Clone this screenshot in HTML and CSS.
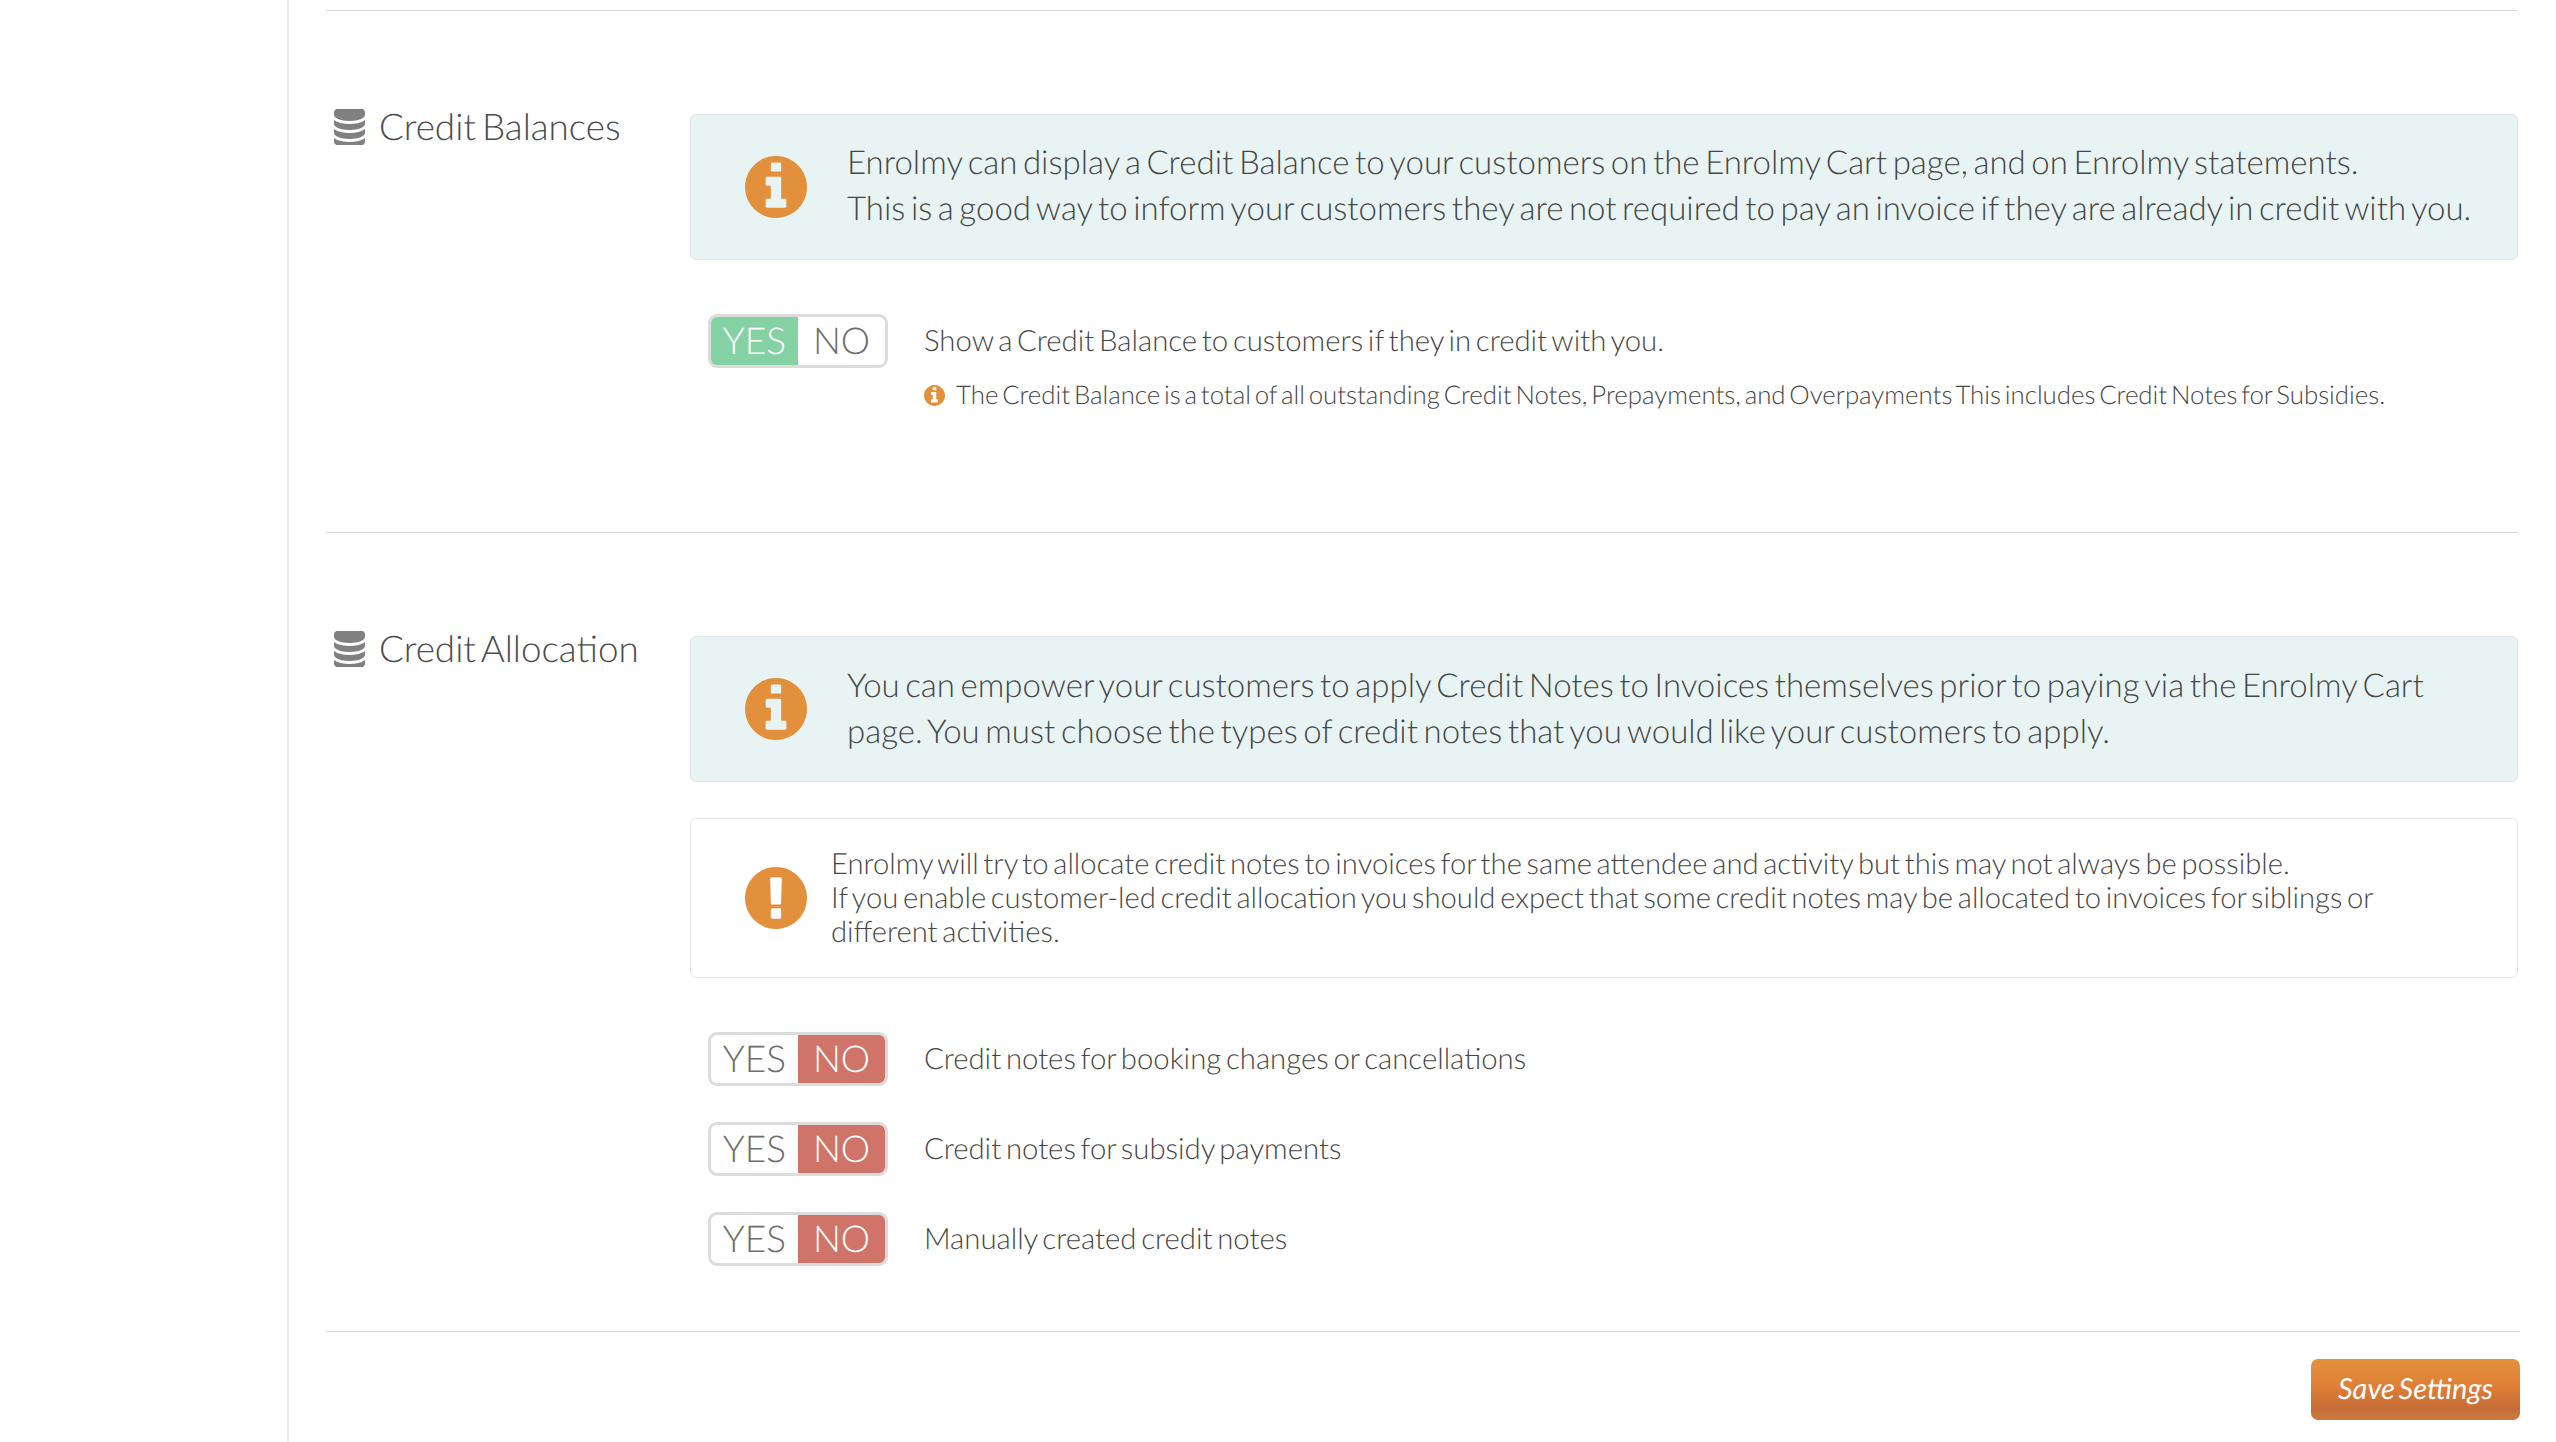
FILE: index.html
```html
<!DOCTYPE html>
<html lang="en">
<head>
<meta charset="utf-8">
<title>Credit settings</title>
<link rel="stylesheet" href="styles.css">
</head>
<body>
<svg class="defs" width="0" height="0" aria-hidden="true">
  <symbol id="i-db" viewBox="0 128 1536 1536" preserveAspectRatio="none"><path d="M768 768q237 0 443-43t325-127v170q0 69-103 128t-280 93.500-385 34.500-385-34.500-280-93.500-103-128v-170q119 84 325 127t443 43zm0 768q237 0 443-43t325-127v170q0 69-103 128t-280 93.500-385 34.500-385-34.500-280-93.500-103-128v-170q119 84 325 127t443 43zm0-384q237 0 443-43t325-127v170q0 69-103 128t-280 93.500-385 34.500-385-34.500-280-93.500-103-128v-170q119 84 325 127t443 43zm0-1152q208 0 385 34.500t280 93.500 103 128v128q0 69-103 128t-280 93.500-385 34.500-385-34.500-280-93.500-103-128v-128q0-69 103-128t280-93.500 385-34.500z"/></symbol>
  <symbol id="i-info" viewBox="0 128 1536 1536"><path d="M1024 1376v-160q0-14-9-23t-23-9h-96v-512q0-14-9-23t-23-9h-320q-14 0-23 9t-9 23v160q0 14 9 23t23 9h96v320h-96q-14 0-23 9t-9 23v160q0 14 9 23t23 9h448q14 0 23-9t9-23zm-128-896v-160q0-14-9-23t-23-9h-192q-14 0-23 9t-9 23v160q0 14 9 23t23 9h192q14 0 23-9t9-23zm640 416q0 209-103 385.500t-279.500 279.500-385.500 103-385.500-103-279.500-279.500-103-385.500 103-385.500 279.500-279.500 385.500-103 385.500 103 279.500 279.500 103 385.500z"/></symbol>
  <symbol id="i-warn" viewBox="0 128 1536 1536"><path d="M768 128q209 0 385.500 103t279.500 279.500 103 385.500-103 385.500-279.500 279.500-385.500 103-385.500-103-279.500-279.500-103-385.500 103-385.500 279.500-279.500 385.500-103zm128 1247v-190q0-14-9-23.500t-22-9.500h-192q-13 0-23 10t-10 23v190q0 13 10 23t23 10h192q13 0 22-9.500t9-23.500zm-2-344l18-621q0-12-10-18-10-8-24-8h-220q-14 0-24 8-10 6-10 18l17 621q0 10 10 17.500t24 7.500h185q14 0 23.500-7.500t10.500-17.500z"/></symbol>
</svg>
<div class="page">
  <aside class="sidebar"></aside>
  <main class="content">
    <section class="section first">
      <h2 class="heading"><svg class="db"><use href="#i-db"/></svg>Credit Balances</h2>
      <div class="body">
        <div class="alert info">
          <svg class="big-icon"><use href="#i-info"/></svg>
          <p>Enrolmy can display a Credit Balance to your customers on the Enrolmy Cart page, and on Enrolmy statements.<br>This is a good way to inform your customers they are not required to pay an invoice if they are already in credit with you.</p>
        </div>
        <div class="option top-option">
          <div class="toggle"><span class="yes on">YES</span><span class="no">NO</span></div>
          <div class="label">Show a Credit Balance to customers if they in credit with you.</div>
        </div>
        <div class="hint"><svg class="small-icon"><use href="#i-info"/></svg>The Credit Balance is a total of all outstanding Credit Notes, Prepayments, and Overpayments This includes Credit Notes for Subsidies.</div>
      </div>
    </section>
    <section class="section second">
      <h2 class="heading"><svg class="db"><use href="#i-db"/></svg>Credit Allocation</h2>
      <div class="body">
        <div class="alert info">
          <svg class="big-icon"><use href="#i-info"/></svg>
          <p>You can empower your customers to apply Credit Notes to Invoices themselves prior to paying via the Enrolmy Cart page. You must choose the types of credit notes that you would like your customers to apply.</p>
        </div>
        <div class="alert warning">
          <svg class="big-icon"><use href="#i-warn"/></svg>
          <p>Enrolmy will try to allocate credit notes to invoices for the same attendee and activity but this may not always be possible.<br>If you enable customer-led credit allocation you should expect that some credit notes may be allocated to invoices for siblings or different activities.</p>
        </div>
        <div class="options">
          <div class="option">
            <div class="toggle"><span class="yes">YES</span><span class="no on">NO</span></div>
            <div class="label">Credit notes for booking changes or cancellations</div>
          </div>
          <div class="option">
            <div class="toggle"><span class="yes">YES</span><span class="no on">NO</span></div>
            <div class="label">Credit notes for subsidy payments</div>
          </div>
          <div class="option">
            <div class="toggle"><span class="yes">YES</span><span class="no on">NO</span></div>
            <div class="label">Manually created credit notes</div>
          </div>
        </div>
      </div>
    </section>
    <footer class="actions"><button class="save" type="button">Save Settings</button></footer>
  </main>
</div>
</body>
</html>
```

FILE: styles.css
```css
* { box-sizing: border-box; }
html, body { margin: 0; padding: 0; background: #fff; }
body { height: 1442px; overflow: hidden; font-family: "Lato", sans-serif; font-weight: 300; color: #464646; text-rendering: geometricPrecision; word-spacing: -3.2px; }
.defs { position: absolute; }
.page { display: flex; height: 1442px; }
.sidebar { width: 289px; flex: none; border-right: 2px solid #ececec; }
.content { margin-left: 37px; width: 2192px; padding-top: 10px; }
.section { display: flex; border-top: 1px solid #d8d8d8; padding-top: 103px; }
.section.first { height: 522px; }
.section.second { height: 799px; }
.heading { width: 364px; flex: none; margin: -10px 0 0; display: flex; align-items: flex-start; font-size: 36.8px; font-weight: 300; line-height: 44px; padding-left: 8px; color: #4c4c4c; word-spacing: -4px; }
.db { width: 31px; height: 36px; fill: #808080; margin: 5px 14px 0 0; flex: none; }
.body { flex: 1; min-width: 0; }
.alert { display: flex; align-items: center; border: 1px solid #dde6e6; border-radius: 6px; padding-left: 54px; }
.alert.info { height: 146px; background: #e8f4f4; }
.alert.warning { height: 160px; margin-top: 36px; border-color: #e4e4e4; background: #fff; }
.alert p { margin: 0; }
.alert.info p { font-size: 33px; line-height: 45.6px; word-spacing: -3.4px; margin-left: 40px; padding-right: 20px; position: relative; top: -1px; }
.section.second .alert.info p { top: 0; }
.alert.warning p { font-size: 29.2px; line-height: 34px; margin-left: 24px; padding-right: 120px; position: relative; top: 0; }
.big-icon { width: 62px; height: 62px; flex: none; fill: #e3903d; }
.option { display: flex; align-items: center; height: 54px; margin-left: 18px; }
.top-option { margin-top: 54px; }
.options { margin-top: 54px; display: flex; flex-direction: column; gap: 36px; }
.toggle { display: flex; width: 180px; height: 54px; border: 3px solid #dcdcdc; border-radius: 9px; overflow: hidden; flex: none; background: #fff; font-size: 37px; line-height: 46px; color: #6e6e6e; text-align: center; }
.toggle .yes { width: 87px; }
.toggle .no { flex: 1; }
.toggle .yes.on { background: #84d2a3; color: #fff; }
.toggle .no.on { background: #d07368; color: #fff; }
.label { margin-left: 36px; font-size: 29.3px; padding-bottom: 2px; }
.hint { margin: 12px 0 0 234px; display: flex; align-items: center; font-size: 25.8px; line-height: 30px; }
.small-icon { width: 21px; height: 21px; flex: none; fill: #e3903d; margin-right: 11px; }
.actions { display: flex; justify-content: flex-end; padding-top: 27px; border-top: 1px solid #d8d8d8; margin-right: -2px; }
.save { width: 209px; height: 61px; border: 0; border-radius: 7px; padding: 0 0 3px; color: #fff; font-family: "Lato", sans-serif; font-size: 29px; font-style: italic; font-weight: 400; word-spacing: -3px; text-rendering: geometricPrecision; background: linear-gradient(180deg, #e3913e 0%, #de7f35 45%, #c56d38 82%, #cd7b42 100%); }
```
